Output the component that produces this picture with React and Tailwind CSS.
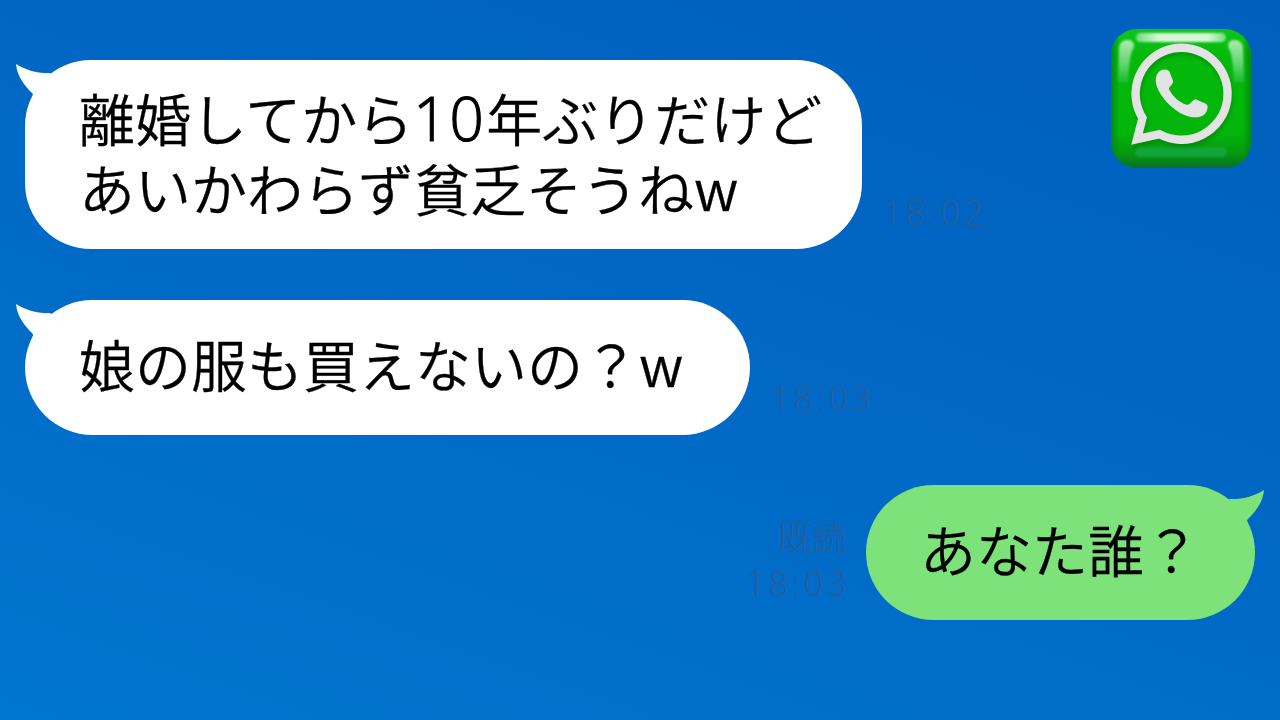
import React from "react";

const FONT = "font-['Noto_Sans_CJK_JP','Noto_Sans',sans-serif]";

function Tail({ className, fill, mirrored }) {
  return (
    <svg className={className} width="60" height="50" viewBox="0 0 60 50" fill={fill}>
      <path
        transform={mirrored ? "translate(60 0) scale(-1 1)" : undefined}
        d="M0 0C9 6 22 9.500 34 9L50 20L24 40L16 29C8 21 1 12 0 0Z"
      />
    </svg>
  );
}

function Stamp({ children, className }) {
  return (
    <div
      className={`font-['Open_Sans','Noto_Sans_CJK_JP',sans-serif] text-[34px] leading-[46px] font-light text-[#2c5c98] whitespace-nowrap ${className}`}
    >
      {children}
    </div>
  );
}

function Bubble({ children, className }) {
  return (
    <div
      className={`relative pl-[54px] text-[56px] font-[350] leading-[70px] whitespace-nowrap [-webkit-text-stroke:0.3px_#000] ${className}`}
    >
      {children}
    </div>
  );
}

function AppIcon() {
  return (
    <svg className="absolute left-[1108px] top-[26px]" width="146" height="146" viewBox="0 0 146 146">
      <defs>
        <linearGradient id="body" x1="0" y1="0" x2="0" y2="1">
          <stop offset="0" stopColor="#0fc41c" />
          <stop offset="0.2" stopColor="#04b90a" />
          <stop offset="0.75" stopColor="#03b50b" />
          <stop offset="0.9" stopColor="#05970f" />
          <stop offset="1" stopColor="#087026" />
        </linearGradient>
        <linearGradient id="edge" x1="0" y1="0" x2="1" y2="0">
          <stop offset="0" stopColor="#067f18" stopOpacity="0.8" />
          <stop offset="0.06" stopColor="#067f18" stopOpacity="0" />
          <stop offset="0.94" stopColor="#067f18" stopOpacity="0" />
          <stop offset="1" stopColor="#067f18" stopOpacity="0.8" />
        </linearGradient>
        <linearGradient id="side" x1="0" y1="0" x2="0" y2="1">
          <stop offset="0" stopColor="#c9f3c9" stopOpacity="0.85" />
          <stop offset="0.6" stopColor="#75db84" stopOpacity="0.8" />
          <stop offset="1" stopColor="#4bc96b" stopOpacity="0.35" />
        </linearGradient>
        <linearGradient id="top" x1="0" y1="0" x2="1" y2="0">
          <stop offset="0" stopColor="#6fdd80" />
          <stop offset="0.25" stopColor="#d5f7d6" />
          <stop offset="0.8" stopColor="#d5f7d6" />
          <stop offset="1" stopColor="#6fdd80" />
        </linearGradient>
        <filter id="soft" x="-20%" y="-20%" width="140%" height="140%">
          <feGaussianBlur stdDeviation="1" />
        </filter>
        <filter id="shade" x="-20%" y="-20%" width="140%" height="140%">
          <feGaussianBlur stdDeviation="2" />
        </filter>
      </defs>
      <rect x="3" y="3" width="140" height="139" rx="26" fill="url(#body)" />
      <rect x="3" y="3" width="140" height="139" rx="26" fill="url(#edge)" />
      <rect x="28" y="7" width="90" height="9" rx="4.500" fill="url(#top)" filter="url(#soft)" />
      <path d="M11 22Q12 13 21 14Q29 16 24 25Q21 33 20 56H10Z" fill="url(#side)" filter="url(#soft)" />
      <path d="M135 22Q134 13 125 14Q117 16 122 25Q125 33 126 56H136Z" fill="url(#side)" filter="url(#soft)" />
      <rect x="27" y="121" width="92" height="10" rx="5" fill="#16a845" opacity="0.8" filter="url(#soft)" />
      <g transform="translate(1 4)" opacity="0.35" filter="url(#shade)" fill="none" stroke="#034f08" strokeWidth="8">
        <path d="M29 112.500L34.500 91.300A46 46 0 1 1 51.500 107.400Z" />
      </g>
      <g transform="translate(0 0.7)">
        <path
          d="M29 112.500L34.500 91.300A46 46 0 1 1 51.500 107.400Z"
          fill="none"
          stroke="#e3e3e3"
          strokeWidth="8.400"
          strokeMiterlimit="6"
        />
        <path
          d="M53 43.500C57 42 60 43 61.500 45L65 54C66 57 60.500 60 61 62.500C65 70 71 75.500 78.500 78C82 79 84 73 87.500 72.500L98 77C101 79 99.500 85 96.500 87.500C91 92 83 91 77 88.500C64 83 53 71 49 60C46.500 53.500 48 46 53 43.500Z"
          fill="#e3e3e3"
        />
      </g>
    </svg>
  );
}

export default function App() {
  return (
    <main
      className={`relative flex h-[720px] w-[1280px] flex-col overflow-hidden bg-[linear-gradient(199deg,#005fbd_0%,#0067c4_42%,#006dc8_65%,#0076d0_100%)] pt-[60px] text-black ${FONT}`}
    >
      <section className="flex items-end pl-[25px]">
        <Bubble className="h-[189px] w-[836.500px] rounded-[66px] bg-white pt-[22px]">
          <Tail className="absolute -left-[9px] top-[4px]" fill="#fff" />
          <p>
            離婚してから
            <span className="inline-block w-[73px] font-['Open_Sans',sans-serif] text-[60px] leading-[60px] font-light tracking-[2px] [-webkit-text-stroke:1.2px_#000]">
              10
            </span>
            年ぶりだけど
          </p>
          <p>あいかわらず貧乏そうねw</p>
        </Bubble>
        <Stamp className="pb-[14px] pl-[21px] tracking-[3.7px]">18:02</Stamp>
      </section>

      <section className="mt-[51px] flex items-end pl-[25px]">
        <Bubble className="h-[135px] w-[724.500px] rounded-[67.500px] bg-white pt-[28px]">
          <Tail className="absolute -left-[9px] top-[4px]" fill="#fff" />
          <p>娘の服も買えないの？w</p>
        </Bubble>
        <Stamp className="pb-[14px] pl-[21px] tracking-[3.7px]">18:03</Stamp>
      </section>

      <section className="mt-[50px] flex items-end justify-end pr-[25px]">
        <div className="pb-[14px] pr-[16px] text-right">
          <Stamp className="pr-[4px]">既読</Stamp>
          <Stamp className="tracking-[3.7px]">18:03</Stamp>
        </div>
        <Bubble className="h-[135px] w-[389px] rounded-[67.500px] bg-[#7de27a] pt-[28px]">
          <Tail className="absolute -right-[9px] top-[5px]" fill="#7de27a" mirrored />
          <p>あなた誰？</p>
        </Bubble>
      </section>
      <AppIcon />
    </main>
  );
}
